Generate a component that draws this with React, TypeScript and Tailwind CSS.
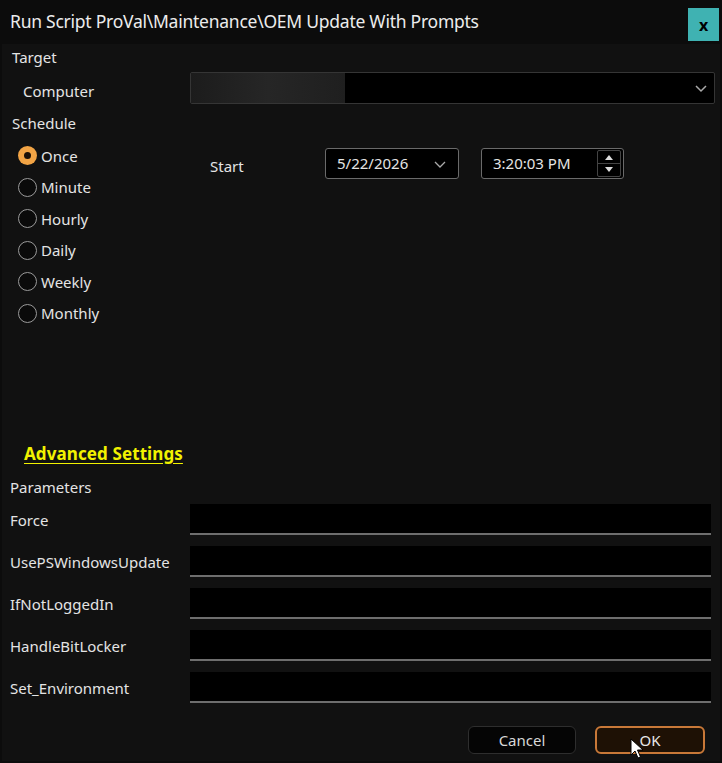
import React from "react";

const font = { fontFamily: '"Noto Sans", "Open Sans", sans-serif' };

function Radio({ label, checked }: { label: string; checked?: boolean }) {
  return (
    <div className="flex items-center h-[31.5px]">
      {checked ? (
        <div className="w-[19px] h-[19px] rounded-full bg-[#f2a445] flex items-center justify-center">
          <div className="w-[7px] h-[7px] rounded-full bg-[#1a1008]" />
        </div>
      ) : (
        <div className="w-[19px] h-[19px] rounded-full border-[1.5px] border-[#9a9a9a] bg-[#0a0a0a]" />
      )}
      <span className="ml-[4px] text-[15px] text-[#e4e4e4]">{label}</span>
    </div>
  );
}

function ParamRow({ label }: { label: string }) {
  return (
    <div className="flex items-center h-[42px]">
      <span className="w-[180px] text-[15px] text-[#e4e4e4] pt-[3px]">{label}</span>
      <div className="w-[521px] h-[31px] bg-black border-b-2 border-[#6e6e6e]" />
    </div>
  );
}

export default function App() {
  return (
    <div className="w-[722px] h-[763px] bg-[#0c0c0c] flex flex-col relative overflow-hidden" style={font}>
      {/* title bar */}
      <div className="h-[44px] flex items-start shrink-0">
        <div className="pl-[10px] pt-[8px] text-[17.5px] text-[#ececec] flex-1 tracking-[-0.25px]">
          Run Script ProVal\Maintenance\OEM Update With Prompts
        </div>
        <div className="mt-[8px] mr-[3px] w-[31px] h-[33px] bg-[#3fb2b2] flex items-center justify-center">
          <span className="text-[16px] font-bold text-black leading-none">x</span>
        </div>
      </div>
      {/* body */}
      <div className="flex-1 flex flex-col bg-[#111111] mx-[2px] mb-[2px]">
        <div className="h-[26px] pl-[10px] text-[15px] text-[#e4e4e4] leading-[26px]">Target</div>
        <div className="h-[36px] flex items-center">
          <span className="w-[188px] pl-[21px] pt-[6px] text-[15px] text-[#e4e4e4]">Computer</span>
          <div className="w-[525px] h-[32px] flex border border-[#353535] rounded-[2px] bg-black">
            <div className="w-[155px] h-full bg-gradient-to-r from-[#1c1c1c] via-[#262626] to-[#1f1f1f] border-r border-black" />
            <div className="flex-1" />
            <svg width="14" height="14" viewBox="0 0 14 14" className="mt-[8px] mr-[6px]">
              <path d="M2 5 L7 10 L12 5" stroke="#aaaaaa" strokeWidth="1.5" fill="none" />
            </svg>
          </div>
        </div>
        <div className="h-[30px] pl-[10px] text-[15px] text-[#e4e4e4] leading-[30px] mt-[2px]">Schedule</div>
        <div className="flex mt-[2px]">
          <div className="w-[208px] pl-[16px] flex flex-col">
            <Radio label="Once" checked />
            <Radio label="Minute" />
            <Radio label="Hourly" />
            <Radio label="Daily" />
            <Radio label="Weekly" />
            <Radio label="Monthly" />
          </div>
          <div className="flex items-center h-[31px] mt-[8px]">
            <span className="w-[115px] text-[15px] text-[#e4e4e4] pt-[6px]">Start</span>
            <div className="w-[134px] h-[31px] border border-[#6a6a6a] rounded-[3px] bg-black flex items-center px-[11px]">
              <span className="text-[15px] text-[#e4e4e4] flex-1">5/22/2026</span>
              <svg width="14" height="14" viewBox="0 0 14 14">
                <path d="M2 5 L7 10 L12 5" stroke="#aaaaaa" strokeWidth="1.3" fill="none" />
              </svg>
            </div>
            <div className="ml-[22px] w-[143px] h-[31px] border border-[#6a6a6a] rounded-[3px] bg-black flex items-center pl-[11px] pr-[2px]">
              <span className="text-[15px] text-[#e4e4e4] flex-1">3:20:03 PM</span>
              <div className="flex flex-col w-[24px] h-[27px] border border-[#444] rounded-[2px]">
                <div className="flex-1 flex items-center justify-center border-b border-[#444]">
                  <svg width="10" height="6" viewBox="0 0 10 6"><path d="M1 6 L5 1 L9 6 Z" fill="#dddddd" /></svg>
                </div>
                <div className="flex-1 flex items-center justify-center">
                  <svg width="10" height="6" viewBox="0 0 10 6"><path d="M1 0 L5 5 L9 0 Z" fill="#dddddd" /></svg>
                </div>
              </div>
            </div>
          </div>
        </div>
        <div className="h-[110px]" />
        <div className="pl-[22px] h-[30px] pt-[2px]">
          <span className="text-[17px] font-bold text-[#f2f200] underline underline-offset-[3px] tracking-[0.1px]">
            Advanced Settings
          </span>
        </div>
        <div className="h-[29px] pl-[8px] text-[15px] text-[#e4e4e4] leading-[36px]">Parameters</div>
        <div className="pl-[8px] flex flex-col">
          <ParamRow label="Force" />
          <ParamRow label="UsePSWindowsUpdate" />
          <ParamRow label="IfNotLoggedIn" />
          <ParamRow label="HandleBitLocker" />
          <ParamRow label="Set_Environment" />
        </div>
        <div className="flex justify-end mt-[18px] pr-[15px] gap-[19px]">
          <div className="w-[108px] h-[28px] rounded-[6px] bg-[#050505] border border-[#2e2e2e] flex items-center justify-center text-[15px] text-[#d8d8d8]">
            Cancel
          </div>
          <div className="w-[110px] h-[28px] rounded-[6px] bg-[#1e1105] border-2 border-[#c87838] flex items-center justify-center text-[15px] text-[#e8e8e8] relative">
            OK
            <svg width="14" height="22" viewBox="0 0 14 22" className="absolute left-[33px] top-[10px]">
              <path d="M1 1 L1 17 L5 13 L8 20 L10.5 19 L7.5 12 L13 12 Z" fill="#ffffff" stroke="#000000" strokeWidth="1" />
            </svg>
          </div>
        </div>
      </div>
    </div>
  );
}
